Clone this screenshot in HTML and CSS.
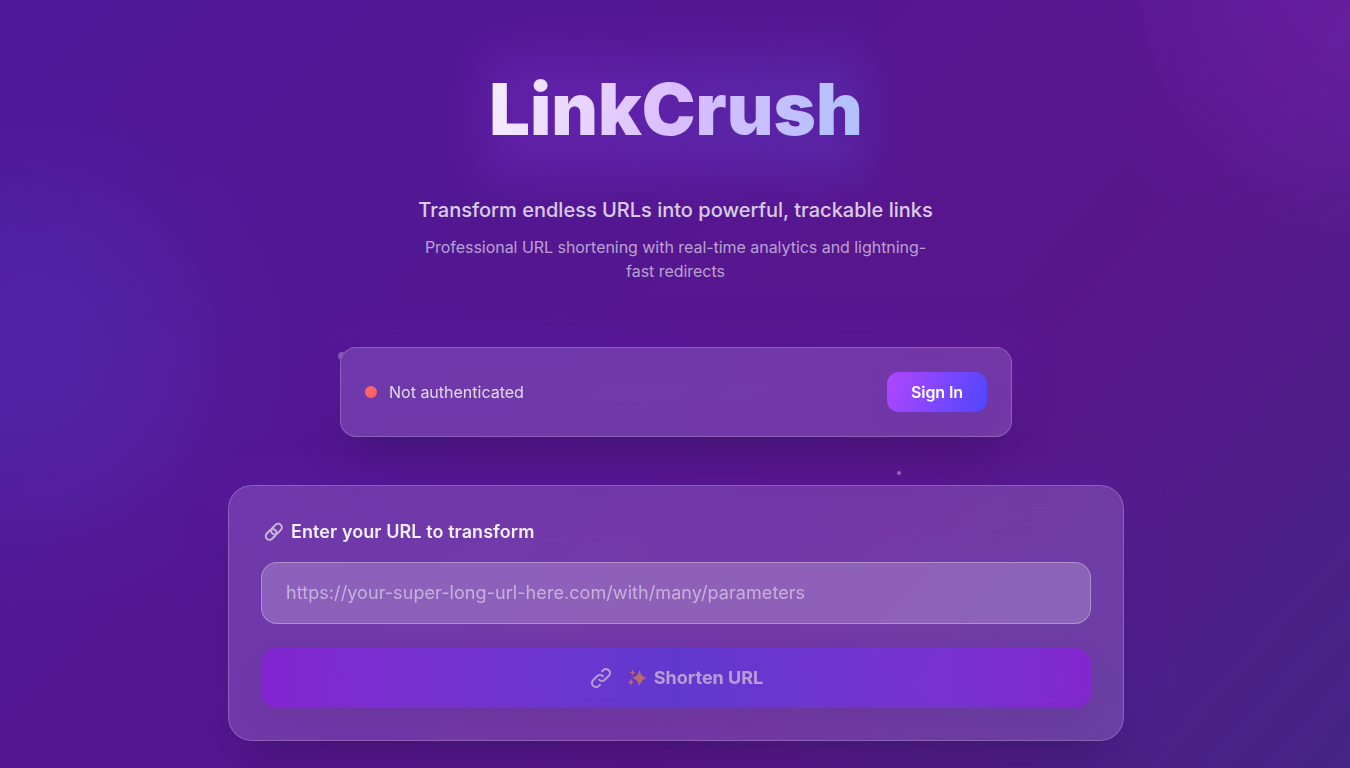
FILE: index.html
```html
<!DOCTYPE html>
<html lang="en">
<head>
<meta charset="utf-8">
<title>LinkCrush</title>
<link rel="stylesheet" href="styles.css">
</head>
<body>
<div class="page">
  <div class="blob blob-pink"></div>
  <div class="blob blob-blue"></div>
  <span class="particle particle-a"></span>
  <span class="particle particle-b"></span>
  <main class="content">
    <header class="hero">
      <div class="brand"><div class="brand-glow"></div><h1 class="title">LinkCrush</h1></div>
      <p class="tagline">Transform endless URLs into powerful, trackable links</p>
      <p class="description">Professional URL shortening with real-time analytics and lightning-fast redirects</p>
    </header>
    <section class="glass auth">
      <span class="dot"></span>
      <span class="auth-text">Not authenticated</span>
      <button class="sign-in">Sign In</button>
    </section>
    <form class="glass shortener">
      <label class="label" for="url"><svg class="chain" viewBox="0 0 22 22" width="22" height="22" fill="none"><g transform="rotate(-45 11 11)" stroke-width="2"><rect x="1.200" y="7" width="12" height="7.400" rx="3.700"/><rect x="8.800" y="7" width="12" height="7.400" rx="3.700"/></g></svg><span>Enter your URL to transform</span></label>
      <input class="url-input" id="url" type="url" placeholder="https://your-super-long-url-here.com/with/many/parameters">
      <button class="submit" type="submit" disabled>
        <svg class="link-icon" viewBox="0 0 24 24" width="24" height="24" fill="none" stroke="currentColor" stroke-width="2" stroke-linecap="round" stroke-linejoin="round"><path d="M13.828 10.172a4 4 0 00-5.656 0l-4 4a4 4 0 105.656 5.656l1.102-1.101m-.758-4.899a4 4 0 005.656 0l4-4a4 4 0 00-5.656-5.656l-1.1 1.1"/></svg>
        <span class="submit-label"><svg class="sparkles" viewBox="0 0 22 22" width="22" height="22"><path d="M12.500 3C13.800 7.600 15.400 9.500 20 11 15.400 12.500 13.800 14.400 12.500 19 11.200 14.400 9.600 12.500 5 11 9.600 9.500 11.200 7.600 12.500 3zM5.500 2.500C6 4.300 6.500 4.900 8.300 5.500 6.500 6.100 6 6.700 5.500 8.500 5 6.700 4.500 6.100 2.700 5.500 4.500 4.900 5 4.300 5.500 2.500zM4 11.500C4.500 14 5.100 14.600 7 15.200 5.100 15.800 4.500 16.500 4 19 3.500 16.500 2.900 15.800 1 15.200 2.900 14.600 3.500 14 4 11.500z"/></svg><span>Shorten URL</span></span>
      </button>
    </form>
  </main>
</div>
</body>
</html>
```
FILE: styles.css
```css
* { box-sizing: border-box; }
body { margin: 0; height: 768px; overflow: hidden; font-family: Inter, "Liberation Sans", sans-serif; color: #fff; }
h1, p { margin: 0; }
button, input { font: inherit; color: inherit; border: 0; }
.page { position: relative; height: 768px; overflow: hidden; background: linear-gradient(to bottom right in oklab, #4d179a, #59168b 50%, #312c85) 0 0 / 100% 1500px no-repeat; }
.blob { position: absolute; border-radius: 50%; filter: blur(64px); }
.blob-pink { left: 1170px; top: -190px; width: 360px; height: 360px; background: #ad46ff; opacity: .15; }
.blob-blue { left: -145px; top: 178px; width: 350px; height: 350px; background: #615fff; opacity: .15; }
.particle { position: absolute; border-radius: 50%; background: #fff; }
.particle-a { left: 338px; top: 352px; width: 8px; height: 8px; opacity: .3; clip-path: polygon(0 0, 75% 0, 25% 100%, 0 100%); }
.particle-b { left: 897px; top: 471px; width: 4px; height: 4px; opacity: .4; }
.content { position: relative; display: flex; flex-direction: column; align-items: center; padding-top: 64px; padding-left: 2px; }
.hero { display: flex; flex-direction: column; align-items: center; text-align: center; }
.brand { position: relative; height: 90px; display: flex; align-items: center; }
.brand-glow { position: absolute; inset: -10px -4px -24px; background: linear-gradient(to right, #9f46ff, #615fff); filter: blur(24px); opacity: .2; }
.title { position: relative; font-size: 72px; line-height: 90px; font-weight: 900; color: transparent; background: linear-gradient(100deg in oklab, #f7edff, #dabdff 50%, #b0c2ff); background-clip: text; -webkit-background-clip: text; }
.tagline { margin-top: 42px; margin-right: 1px; font-size: 20px; line-height: 28px; font-weight: 500; color: rgba(255,255,255,.8); }
.description { width: 512px; margin-top: 11px; margin-right: 1px; font-size: 16px; line-height: 24px; letter-spacing: -.04px; color: rgba(255,255,255,.6); }
.glass { border: 1px solid rgba(255,255,255,.2); background: linear-gradient(rgba(255,255,255,.13), rgba(255,255,255,.13)), rgba(124,58,237,.14); backdrop-filter: blur(24px); box-shadow: 0 25px 50px -12px rgba(0,0,0,.25), 0 0 50px rgba(124,58,237,.18); }
.auth { width: 672px; height: 90px; margin-top: 64px; padding: 24px; border-radius: 16px; display: flex; align-items: center; gap: 12px; }
.dot { width: 12px; height: 12px; border-radius: 50%; background: #ff6467; }
.auth-text { font-size: 16px; line-height: 24px; color: rgba(255,255,255,.8); }
.sign-in { margin-left: auto; width: 100px; height: 40px; padding: 0; border-radius: 12px; font-size: 16px; line-height: 24px; font-weight: 600; letter-spacing: -.1px; background: linear-gradient(110deg, #ad46ff 5%, #4f46ff); box-shadow: 0 4px 20px rgba(139,70,237,.25), 0 8px 18px rgba(0,0,0,.08); }
.shortener { width: 896px; height: 256px; margin-top: 48px; padding: 32px; border-radius: 24px; display: flex; flex-direction: column; }
.label { display: flex; align-items: center; gap: 6px; height: 28px; margin-bottom: 16px; padding-left: 2px; font-size: 18px; line-height: 28px; font-weight: 600; letter-spacing: .08px; color: rgba(255,255,255,.92); }
.chain { stroke: #c9b9d7; }
.url-input { width: 100%; height: 62px; padding: 15px 24px 17px; border: 1px solid rgba(255,255,255,.3); border-radius: 16px; background: rgba(255,255,255,.2); font-size: 18px; line-height: 28px; letter-spacing: .07px; outline: 0; }
.url-input::placeholder { color: rgba(255,255,255,.5); opacity: 1; }
.submit { height: 60px; margin-top: 24px; border-radius: 16px; display: flex; align-items: center; justify-content: center; gap: 12px; font-size: 18px; line-height: 28px; font-weight: 700; opacity: .5; background: linear-gradient(to right in oklab, #9810fa, #4f39f6, #9810fa); box-shadow: 0 15px 35px rgba(0,0,0,.12); }
.submit-label { display: flex; align-items: center; gap: 5px; padding-left: 2px; }
.sparkles { fill: #ff9c39; }
```
